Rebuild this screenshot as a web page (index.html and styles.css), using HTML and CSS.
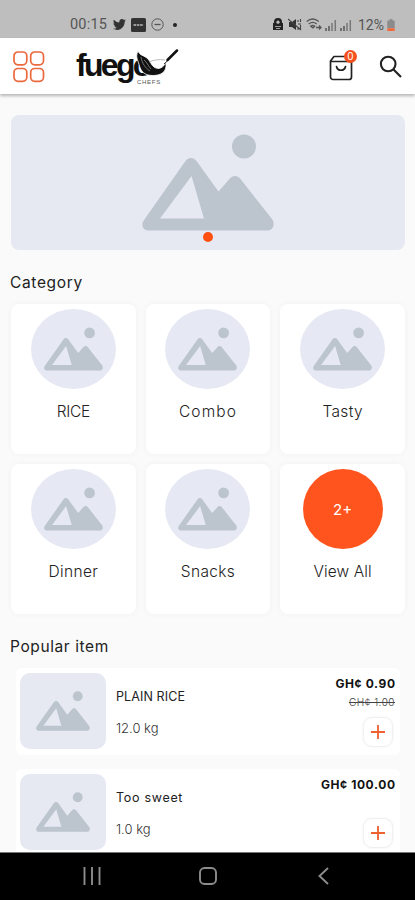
FILE: index.html
```
<!DOCTYPE html>
<html lang="en">
<head>
<meta charset="utf-8">
<title>Fuego Chefs</title>
<link rel="stylesheet" href="styles.css">
</head>
<body>
<svg class="defs" width="0" height="0" aria-hidden="true">
  <symbol id="picture" viewBox="0 0 132 97">
    <circle cx="102" cy="12.5" r="12"/>
    <path fill-rule="evenodd" d="M6 96.5C1 96.5-1.500 91 2 86L43.500 27C46.500 23 51.500 23 54.500 27L76.500 57.500L87.500 45C90.500 41 95.500 41 98.500 45L130 85C133.500 90 131 96.500 126 96.500ZM49.500 42L18 84.500H62Z"/>
  </symbol>
</svg>
<div class="phone">
  <header class="status">
    <div class="status-left">
      <span class="clock">00:15</span>
      <svg width="13" height="11" viewBox="0 0 24 20"><path fill="#333" d="M24 2.400l-2.500 2.500C21.700 12 16.500 20 7.500 20 4.700 20 2 19.200 0 17.800c2.600.3 5.200-.4 7.200-2-2.200 0-4-1.500-4.600-3.400h2.200C2.400 11.800.8 9.800.8 7.500l2.200.6C.8 6.500.2 3.600 1.500 1.300 4 4.300 7.600 6.200 11.700 6.400 11 3.200 13.300 0 16.600 0c1.500 0 2.700.6 3.600 1.500L23.300.4 21.200 3z"/></svg>
      <svg width="15" height="14" viewBox="0 0 15 14"><rect width="15" height="14" rx="1.500" fill="#333"/><path d="M2.500 7h10" stroke="#999" stroke-width="2.200" stroke-dasharray="2.600 .7"/></svg>
      <svg width="13" height="13" viewBox="0 0 13 13" fill="none" stroke="#555"><circle cx="6.500" cy="6.500" r="5.700"/><path d="M3.500 6.500h6" stroke-width="1.300"/></svg>
      <i class="dot"></i>
    </div>
    <div class="status-right">
      <svg width="10" height="13" viewBox="0 0 10 13"><path fill="#222" d="M1 4a4 4 0 0 1 8 0v1h1v7H0V5h1z"/><circle cx="5" cy="4.200" r="1.600" fill="#bdbdbd"/><path d="M2 8.500h6M3 10.500h4" stroke="#bdbdbd" stroke-width=".8"/></svg>
      <svg width="14" height="13" viewBox="0 0 14 13"><path fill="#333" d="M1 4h3l4-3v11L4 9H1z"/><path d="M0 1l13 11M10 2v2M12.500 1v3M10 6h3M10 9v3M12.500 7v4" stroke="#444" stroke-width="1.100"/></svg>
      <svg class="wifi" width="16" height="13" viewBox="0 0 16 13" fill="none" stroke="#555" stroke-width="1.300"><path d="M.7 3.500q6-5 12 0M2.700 6q4-3.300 8 0M4.700 8.300q2-1.600 4 0L7 10zM10 9.500h5M13 7.500l2 2-2 2"/></svg>
      <svg width="12" height="12" viewBox="0 0 12 12"><path d="M1 9v3M4 7v5" stroke="#555" stroke-width="1.500"/><path d="M7 4v8M10.300 1v11" stroke="#777" stroke-width="1.500"/></svg>
      <svg class="signal" width="12" height="12" viewBox="0 0 12 12"><path d="M1 9v3M4 7v5" stroke="#555" stroke-width="1.500"/><path d="M7 4v8M10.300 1v11" stroke="#777" stroke-width="1.500"/></svg>
      <span class="percent">12%</span>
      <svg width="8" height="12" viewBox="0 0 8 13"><path d="M2.500 0h3v1.500H8V10H0V1.500h2.500z" fill="#8b8b8b"/><path d="M0 10h8v3H0z" fill="#f26a3a"/></svg>
    </div>
  </header>

  <nav class="bar">
    <svg class="menu" width="32" height="32" viewBox="0 0 32 32" fill="none" stroke="#ec683d" stroke-width="1.700"><rect x="1" y="1" width="12.800" height="12.800" rx="4"/><rect x="17.700" y="1" width="12.800" height="12.800" rx="4"/><rect x="1" y="17.500" width="12.800" height="12.800" rx="4"/><rect x="17.700" y="17.500" width="12.800" height="12.800" rx="4"/></svg>
    <div class="logo">
      <span class="word">fuego</span>
      <span class="chefs">CHEFS</span>
      <svg class="pan" width="46" height="38" viewBox="0 0 46 38">
        <path d="M4 3c2 5 6 4 10 8 3 3 3 6 6 8 3 2 7 3 12-4 1 9-5 12.500-13 12.500C10 27.500 7 23.500 5 16.500 4 12 1 9 4 3Z" fill="#111" stroke="#fff" stroke-width=".8"/>
        <path d="M7 9c1 6 4 11 9 14M10 12c3 2 4 6 7 9" stroke="#999" stroke-width=".7" fill="none"/>
        <path d="M15 14c4-2 10-3 16-2" stroke="#aaa" stroke-width=".8" fill="none"/>
        <path d="M30 16q2-1 4-4" stroke="#111" stroke-width="1" fill="none"/>
        <path d="M33.500 12l9.500-9.500" stroke="#111" stroke-width="2.500" stroke-linecap="round"/>
      </svg>
    </div>
    <div class="bag">
      <svg width="24" height="26" viewBox="0 0 24 26" fill="none" stroke="#222" stroke-width="1.700" stroke-linecap="round" stroke-linejoin="round"><path d="M1.500 6L5 1.500H19L22.500 6V22a2.500 2.500 0 0 1-2.500 2.500H4A2.500 2.500 0 0 1 1.500 22ZM1.500 6.500h21M7.500 11.500c1 5 8 5 9 0"/></svg>
      <b class="badge">0</b>
    </div>
    <svg class="search" width="24" height="24" viewBox="0 0 24 24" fill="none" stroke="#222" stroke-width="2.100"><circle cx="9.200" cy="9" r="7.300"/><path d="M14.500 14.500l7.500 7.500"/></svg>
  </nav>

  <main>
    <section class="banner">
      <svg width="132" height="97"><use href="#picture"/></svg>
      <i class="page-dot"></i>
    </section>

    <h2 class="category-title">Category</h2>
    <section class="grid">
      <article class="card"><div class="round"><svg width="59" height="44"><use href="#picture"/></svg></div><span class="rice">RICE</span></article>
      <article class="card"><div class="round"><svg width="59" height="44"><use href="#picture"/></svg></div><span class="combo">Combo</span></article>
      <article class="card"><div class="round"><svg width="59" height="44"><use href="#picture"/></svg></div><span>Tasty</span></article>
      <article class="card"><div class="round"><svg width="59" height="44"><use href="#picture"/></svg></div><span>Dinner</span></article>
      <article class="card"><div class="round"><svg width="59" height="44"><use href="#picture"/></svg></div><span>Snacks</span></article>
      <article class="card"><div class="round more">2+</div><span class="view">View All</span></article>
    </section>

    <h2 class="popular-title">Popular item</h2>
    <section class="list">
      <article class="item">
        <div class="thumb"><svg width="54" height="40"><use href="#picture"/></svg></div>
        <div class="info"><span class="name caps">PLAIN RICE</span><span class="weight">12.0 kg</span></div>
        <div class="buy"><strong>GH¢ 0.90</strong><del>GH¢ 1.00</del>
          <button class="add" aria-label="Add"><svg width="14" height="14" viewBox="0 0 14 14"><path d="M7 0v14M0 7h14" stroke="#ee6130" stroke-width="1.800"/></svg></button></div>
      </article>
      <article class="item">
        <div class="thumb"><svg width="54" height="40"><use href="#picture"/></svg></div>
        <div class="info"><span class="name">Too sweet</span><span class="weight">1.0 kg</span></div>
        <div class="buy"><strong>GH¢ 100.00</strong>
          <button class="add" aria-label="Add"><svg width="14" height="14" viewBox="0 0 14 14"><path d="M7 0v14M0 7h14" stroke="#ee6130" stroke-width="1.800"/></svg></button></div>
      </article>
    </section>
  </main>

  <footer class="system">
    <svg width="18" height="18" viewBox="0 0 18 18"><path d="M1.500 0v18M9 0v18M16.500 0v18" stroke="#8c8c8c" stroke-width="1.900"/></svg>
    <svg width="18" height="18" viewBox="0 0 18 18"><rect x="1" y="1" width="16" height="16" rx="4.500" fill="none" stroke="#8c8c8c" stroke-width="1.900"/></svg>
    <svg width="18" height="18" viewBox="0 0 18 18"><path d="M13 1L4.500 9l8.500 8" fill="none" stroke="#8c8c8c" stroke-width="1.900"/></svg>
  </footer>
</div>
</body>
</html>
```
FILE: styles.css
```
* { box-sizing: border-box; }
body { margin: 0; background: #fafafa; font-family: Inter, "Open Sans", sans-serif; color: #333; }
svg { display: block; flex: none; }
.defs { position: absolute; }
.phone { width: 415px; height: 900px; display: flex; flex-direction: column; overflow: hidden; }

.status { flex: none; height: 38px; background: #bebebe; display: flex; justify-content: space-between; padding: 11px 20px 0 70px; font-family: Roboto, sans-serif; color: #555; }
.status-left, .status-right { display: flex; align-items: center; height: 27px; }
.status-left { gap: 5px; }
.clock { font-size: 14.500px; width: 38px; letter-spacing: .2px; }
.dot { width: 4px; height: 4px; border-radius: 50%; background: #222; margin-left: 4px; }
.status-right { gap: 2px; }
.status-right svg:first-child { margin-right: 3px; }
.wifi { margin-left: 2px; margin-right: 1px; }
.signal { margin-left: 1px; }
.percent { font-size: 14px; margin-left: 4px; margin-right: 1px; }

.bar { flex: none; height: 56px; background: #fff; display: flex; align-items: flex-start; box-shadow: 0 2px 3px rgba(0,0,0,.28); z-index: 1; padding: 13px 12px 0 13px; }
.logo { position: relative; width: 104px; height: 38px; margin-left: 31px; margin-top: -3px; }
.word { position: absolute; left: 0; top: -2px; font: bold 32px/38px "Liberation Sans", sans-serif; letter-spacing: -2.700px; color: #111; }
.pan { position: absolute; left: 58px; top: 0; }
.chefs { position: absolute; left: 61px; top: 31px; font: 6px/6px "Liberation Sans", sans-serif; letter-spacing: .7px; color: #555; background: #fff; }
.bag { position: relative; margin-left: auto; margin-top: 4px; margin-right: 26px; }
.badge { position: absolute; left: 15px; top: -5px; width: 13px; height: 13px; border-radius: 50%; background: #f4511e; color: #fff; font: 10px/13px Inter, sans-serif; text-align: center; }
.search { margin-top: 4px; }

main { flex: 1; min-height: 0; overflow: hidden; padding: 21px 10px 0 11px; }
.banner { position: relative; height: 135px; border-radius: 8px; background: #e6e9f2; display: flex; justify-content: center; padding-top: 19px; }
.banner svg, .round svg, .thumb svg { fill: #bcc4ce; }
.page-dot { position: absolute; left: 192px; bottom: 8px; width: 10px; height: 10px; border-radius: 50%; background: #ff5012; }
h2 { margin: 0 0 0 -1px; font-size: 15.500px; line-height: 22px; font-weight: 400; color: #222; }
.category-title { margin-top: 22px; letter-spacing: .65px; }
.popular-title { margin-top: 22px; letter-spacing: .6px; }
.grid { margin-top: 10px; display: grid; grid-template-columns: repeat(3, 1fr); gap: 10px; }
.card { height: 150px; border-radius: 8px; background: #fff; box-shadow: 0 0 6px rgba(0,0,0,.04); display: flex; flex-direction: column; align-items: center; padding-top: 5px; }
.card span { margin-top: 12px; font-size: 15.500px; line-height: 22px; font-weight: 300; letter-spacing: .35px; color: #222; }
.card .rice { letter-spacing: -.3px; }
.card .combo { letter-spacing: 1.100px; }
.card .view { letter-spacing: .1px; }
.round { width: 85px; height: 80px; border-radius: 50%; background: #e6e9f3; display: flex; align-items: center; justify-content: center; }
.round.more { width: 80px; background: #ff541d; color: #fff; font-size: 15px; }

.list { margin-top: 10px; padding: 0 5px; display: flex; flex-direction: column; gap: 14px; }
.item { flex: none; height: 87px; background: #fff; border-radius: 6px; display: flex; padding: 5px 5px 0 4px; }
.thumb { width: 86px; height: 76px; border-radius: 10px; background: #e6e9f2; display: flex; align-items: center; justify-content: center; }
.info { display: flex; flex-direction: column; margin-left: 10px; padding-top: 14px; gap: 11px; }
.name { font-size: 12.500px; line-height: 20px; letter-spacing: .7px; color: #222; }
.name.caps { letter-spacing: .1px; }
.weight { font-size: 13px; line-height: 20px; font-weight: 300; color: #333; }
.buy { margin-left: auto; display: flex; flex-direction: column; align-items: flex-end; padding-top: 1px; }
.buy strong { font-size: 12px; line-height: 20px; font-weight: 700; letter-spacing: .6px; margin-right: -.6px; color: #111; }
.buy del { font-size: 10px; line-height: 16px; font-weight: 300; letter-spacing: .5px; color: #444; }
.add { width: 30px; height: 30px; margin: auto 2px 8px 0; padding: 0; border: 1px solid #f0f0f0; border-radius: 9px; background: #fff; display: flex; align-items: center; justify-content: center; box-shadow: 0 0 3px rgba(0,0,0,.05); }

.system { flex: none; height: 48px; border-top: 1px solid #777; background: #000; display: flex; justify-content: space-between; align-items: center; padding: 0 82px 1px 83px; }
```
